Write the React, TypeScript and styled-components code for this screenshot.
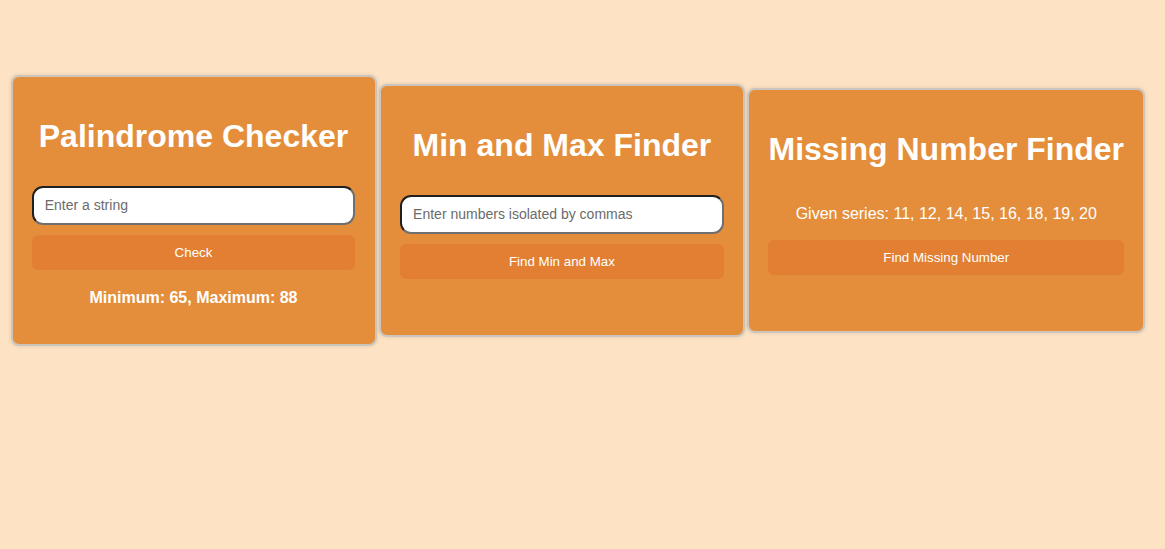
import React from "react";
import styled, { createGlobalStyle } from "styled-components";

const GlobalStyle = createGlobalStyle`
  html, body {
    margin: 0;
    padding: 0;
  }
  body {
    background: #fde3c4;
    font-family: "Liberation Sans", Arial, sans-serif;
    min-height: 549px;
  }
`;

const Row = styled.div`
  display: flex;
  flex-direction: row;
  align-items: center;
  gap: 2.4px;
  padding: 0 0 0 10.5px;
  height: 421px;
`;

const Card = styled.div`
  flex: none;
  box-sizing: border-box;
  min-width: 366px;
  display: flex;
  flex-direction: column;
  align-items: stretch;
  padding: 19.2px 19.2px 21.2px;
  background: #e48e3c;
  border: 2px solid #cbc5bd;
  border-radius: 8px;
  box-shadow: 0 0 4px rgba(0, 0, 0, 0.12);
  color: #fff;
  text-align: center;
`;

const Title = styled.h1`
  font-size: 32px;
  font-weight: 700;
  margin: 21.44px 0;
  line-height: 37px;
  white-space: nowrap;
`;

const Input = styled.input`
  box-sizing: border-box;
  width: 100%;
  height: 39px;
  margin: 10px 0 10px;
  padding: 0 11px;
  font-family: "Liberation Sans", Arial, sans-serif;
  font-size: 14px;
  background: #fff;
  border-width: 2px;
  border-style: solid;
  border-color: #202020 #6f6f6f #6f6f6f #202020;
  border-radius: 11px;
  outline: none;
  &::placeholder {
    color: #6b6b6b;
  }
`;

const Button = styled.button`
  box-sizing: border-box;
  width: 100%;
  height: 35px;
  border: none;
  border-radius: 6px;
  background: #e27f32;
  color: #fff;
  font-family: "Liberation Sans", Arial, sans-serif;
  font-size: 13.33px;
  cursor: pointer;
`;

const Series = styled.p`
  margin: 16px 0 17px;
  font-size: 16px;
  line-height: 18px;
`;

const Result = styled.p`
  margin: 19px 0 16px;
  font-size: 16px;
  font-weight: 700;
  line-height: 18px;
  min-height: 0;
`;

export default function App() {
  return (
    <>
      <GlobalStyle />
      <Row>
        <Card>
          <Title>Palindrome Checker</Title>
          <Input placeholder="Enter a string" />
          <Button>Check</Button>
          <Result>Minimum: 65, Maximum: 88</Result>
        </Card>
        <Card>
          <Title>Min and Max Finder</Title>
          <Input placeholder="Enter numbers isolated by commas" />
          <Button>Find Min and Max</Button>
          <Result></Result>
        </Card>
        <Card>
          <Title>Missing Number Finder</Title>
          <Series>Given series: 11, 12, 14, 15, 16, 18, 19, 20</Series>
          <Button>Find Missing Number</Button>
          <Result></Result>
        </Card>
      </Row>
    </>
  );
}
